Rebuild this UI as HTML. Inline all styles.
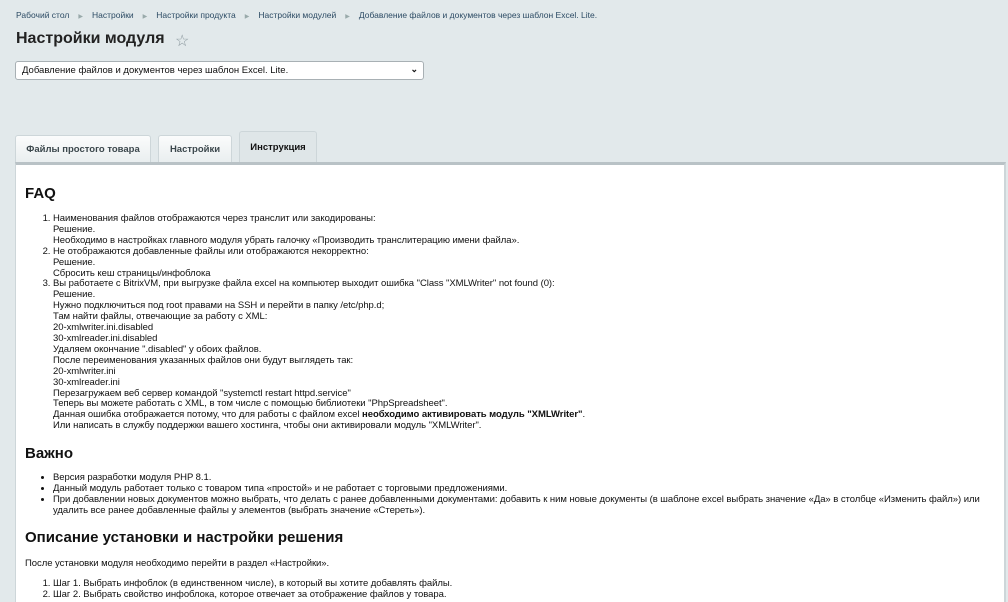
<!DOCTYPE html>
<html><head><meta charset="utf-8">
<style>
*{margin:0;padding:0;box-sizing:border-box}
body{width:1008px;height:600px;overflow:hidden;background:#e2e9eb;font-family:"Liberation Sans",Arial,sans-serif;position:relative;color:#000}
.bc{position:absolute;top:10px;left:16px;font-size:8.5px;color:#2c4b64;white-space:nowrap}
.bc span.s{color:#9aa;margin:0 9px;font-size:6px}
h1{position:absolute;top:30px;left:16px;font-size:16px;font-weight:bold;color:#222;white-space:nowrap}
.star{position:absolute;top:31px;left:175px;font-size:16px;color:#8a979d}
.sel{position:absolute;top:61px;left:15px;width:409px;height:19px;background:#fff;border:1px solid #a8b0b4;border-radius:3px;font-size:9.5px;padding:3px 6px;color:#111}
.sel i{position:absolute;right:5px;top:2px;font-style:normal;font-size:9px;font-weight:bold}
.tab{position:absolute;top:135px;height:28px;border:1px solid #cdd6d9;border-bottom:none;border-radius:3px 3px 0 0;background:linear-gradient(#fbfcfc,#e9eeef);font-size:9.5px;font-weight:bold;color:#3b474c;text-align:center;padding-top:8px}
.tab.a{top:131px;height:33px;background:#dfe6e8;color:#111;padding-top:10px}
.panel{position:absolute;top:162px;left:15px;width:991px;height:440px;background:#fff;border-top:3px solid #b9c2c6;border-left:1px solid #cdd6d9;border-right:2px solid #cdd6d9}
.c{position:absolute;left:25px;font-size:9.5px;line-height:10.9px;letter-spacing:-0.05px;color:#111;white-space:nowrap}
h2{position:absolute;left:25px;font-size:15px;font-weight:bold;color:#111;white-space:nowrap}
ol,ul{padding-left:28px}
</style></head><body>
<div class="bc">Рабочий стол<span class="s">▶</span>Настройки<span class="s">▶</span>Настройки продукта<span class="s">▶</span>Настройки модулей<span class="s">▶</span>Добавление файлов и документов через шаблон Excel. Lite.</div>
<h1>Настройки модуля</h1>
<div class="star">☆</div>
<div class="sel">Добавление файлов и документов через шаблон Excel. Lite.<i>⌄</i></div>
<div class="tab" style="left:15px;width:136px">Файлы простого товара</div>
<div class="tab" style="left:158px;width:74px">Настройки</div>
<div class="tab a" style="left:239px;width:78px">Инструкция</div>
<div class="panel"></div>
<h2 style="top:185px">FAQ</h2>
<div class="c" style="top:214px"><ol>
<li>Наименования файлов отображаются через транслит или закодированы:<br>Решение.<br>Необходимо в настройках главного модуля убрать галочку «Производить транслитерацию имени файла».</li>
<li>Не отображаются добавленные файлы или отображаются некорректно:<br>Решение.<br>Сбросить кеш страницы/инфоблока</li>
<li>Вы работаете с BitrixVM, при выгрузке файла excel на компьютер выходит ошибка "Class "XMLWriter" not found (0):<br>Решение.<br>Нужно подключиться под root правами на SSH и перейти в папку /etc/php.d;<br>Там найти файлы, отвечающие за работу с XML:<br>20-xmlwriter.ini.disabled<br>30-xmlreader.ini.disabled<br>Удаляем окончание ".disabled" у обоих файлов.<br>После переименования указанных файлов они будут выглядеть так:<br>20-xmlwriter.ini<br>30-xmlreader.ini<br>Перезагружаем веб сервер командой "systemctl restart httpd.service"<br>Теперь вы можете работать с XML, в том числе с помощью библиотеки "PhpSpreadsheet".<br>Данная ошибка отображается потому, что для работы с файлом excel <b>необходимо активировать модуль "XMLWriter"</b>.<br>Или написать в службу поддержки вашего хостинга, чтобы они активировали модуль "XMLWriter".</li>
</ol></div>
<h2 style="top:445px">Важно</h2>
<div class="c" style="top:473px"><ul>
<li>Версия разработки модуля PHP 8.1.</li>
<li>Данный модуль работает только с товаром типа «простой» и не работает с торговыми предложениями.</li>
<li>При добавлении новых документов можно выбрать, что делать с ранее добавленными документами: добавить к ним новые документы (в шаблоне excel выбрать значение «Да» в столбце «Изменить файл») или<br>удалить все ранее добавленные файлы у элементов (выбрать значение «Стереть»).</li>
</ul></div>
<h2 style="top:529px">Описание установки и настройки решения</h2>
<div class="c" style="top:559px">После установки модуля необходимо перейти в раздел «Настройки».</div>
<div class="c" style="top:579px"><ol>
<li>Шаг 1. Выбрать инфоблок (в единственном числе), в который вы хотите добавлять файлы.</li>
<li>Шаг 2. Выбрать свойство инфоблока, которое отвечает за отображение файлов у товара.</li>
</ol></div>
</body></html>
